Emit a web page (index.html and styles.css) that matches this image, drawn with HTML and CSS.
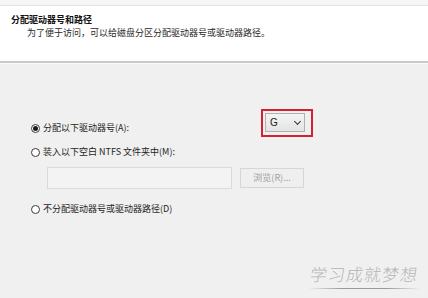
FILE: index.html
```html
<!DOCTYPE html>
<html lang="zh-CN">
<head>
  <meta charset="UTF-8">
  <meta name="viewport" content="width=device-width, initial-scale=1.0">
  <title>分配驱动器号和路径</title>
  <link rel="stylesheet" href="styles.css">
</head>
<body>
  <div class="topbar"></div>
  <div class="header">
    <div class="title">分配驱动器号和路径</div>
    <div class="subtitle">为了便于访问，可以给磁盘分区分配驱动器号或驱动器路径。</div>
  </div>
  <div class="options">
    <div class="row row-letter">
      <label class="option"><span class="radio checked"></span>分配以下驱动器号(A):</label>
      <div class="highlight">
        <div class="select"><span>G</span><span class="chevron"></span></div>
      </div>
    </div>
    <div class="row row-folder">
      <label class="option"><span class="radio"></span>装入以下空白 NTFS 文件夹中(M):</label>
    </div>
    <div class="row row-path">
      <div class="pathbox"></div>
      <div class="browse">浏览(R)...</div>
    </div>
    <div class="row row-none">
      <label class="option"><span class="radio"></span>不分配驱动器号或驱动器路径(D)</label>
    </div>
  </div>
  <div class="watermark">学习成就梦想</div>
</body>
</html>
```

FILE: styles.css
```css
body {
  margin: 0;
  height: 298px;
  background-color: #f0f0f0;
  color: #1e1e1e;
  font-family: "Noto Sans CJK SC", "Liberation Sans", sans-serif;
  font-size: 9px;
  line-height: 12px;
  position: relative;
  overflow: hidden;
}
.topbar {
  height: 5px;
  background-color: #f6f6f6;
  border-bottom: 1px solid #e4e4e4;
}
.header {
  height: 57px;
  background-color: #fff;
  border-bottom: 2px solid #c9c9c9;
  padding-left: 11px;
  box-sizing: border-box;
  padding-top: 8px;
}
.title {
  font-weight: bold;
  color: #111;
}
.subtitle {
  margin-top: 1px;
  padding-left: 16px;
  color: #2a2a2a;
}
.options {
  padding: 45px 0 0 31px;
  border-top: 1px solid #f8f8f8;
}
.row {
  display: flex;
}
.option {
  display: flex;
  align-items: center;
  gap: 3px;
}
.radio {
  width: 9px;
  height: 9px;
  box-sizing: border-box;
  border: 1px solid #3a3a3a;
  border-radius: 50%;
  background-color: #fff;
  display: flex;
  align-items: center;
  justify-content: center;
}
.radio.checked::after {
  content: "";
  width: 5px;
  height: 5px;
  border-radius: 50%;
  background-color: #1a1a1a;
}
.row-letter {
  height: 28px;
}
.row-letter .option {
  width: 230px;
  margin-top: 13px;
  align-self: flex-start;
}
.highlight {
  border: 2px solid #d42030;
  padding: 2px 6px 3px 2px;
  box-sizing: border-box;
  width: 52px;
  height: 28px;
}
.select {
  height: 19px;
  box-sizing: border-box;
  border: 1px solid #b0b0b0;
  background: linear-gradient(#f4f4f4, #e4e4e4);
  display: flex;
  align-items: center;
  justify-content: space-between;
  padding: 0 4px;
  font-family: "Liberation Sans", sans-serif;
  font-size: 10px;
  color: #222;
}
.chevron {
  width: 4px;
  height: 4px;
  border-right: 1px solid #333;
  border-bottom: 1px solid #333;
  transform: rotate(45deg);
  margin-top: -3px;
}
.row-folder {
  margin-top: 9px;
}
.row-path {
  margin-top: 9px;
  padding-left: 16px;
  gap: 8px;
  align-items: center;
}
.pathbox {
  width: 185px;
  height: 22px;
  box-sizing: border-box;
  border: 1px solid #dadada;
  background-color: #f3f3f3;
}
.browse {
  width: 64px;
  height: 20px;
  box-sizing: border-box;
  border: 1px solid #d6d6d6;
  background-color: #efefef;
  color: #a0a0a0;
  display: flex;
  align-items: center;
  justify-content: center;
}
.row-none {
  margin-top: 14px;
}
.watermark {
  position: absolute;
  left: 310px;
  top: 263px;
  width: 112px;
  padding-bottom: 4px;
  font-size: 17px;
  line-height: 22px;
  letter-spacing: 1px;
  color: #b4b4b4;
  font-weight: 300;
  transform: skewX(-8deg);
  background: linear-gradient(90deg, transparent, #9a9a9a 30%, #9a9a9a 70%, transparent) bottom / 100% 1px no-repeat;
}
```
